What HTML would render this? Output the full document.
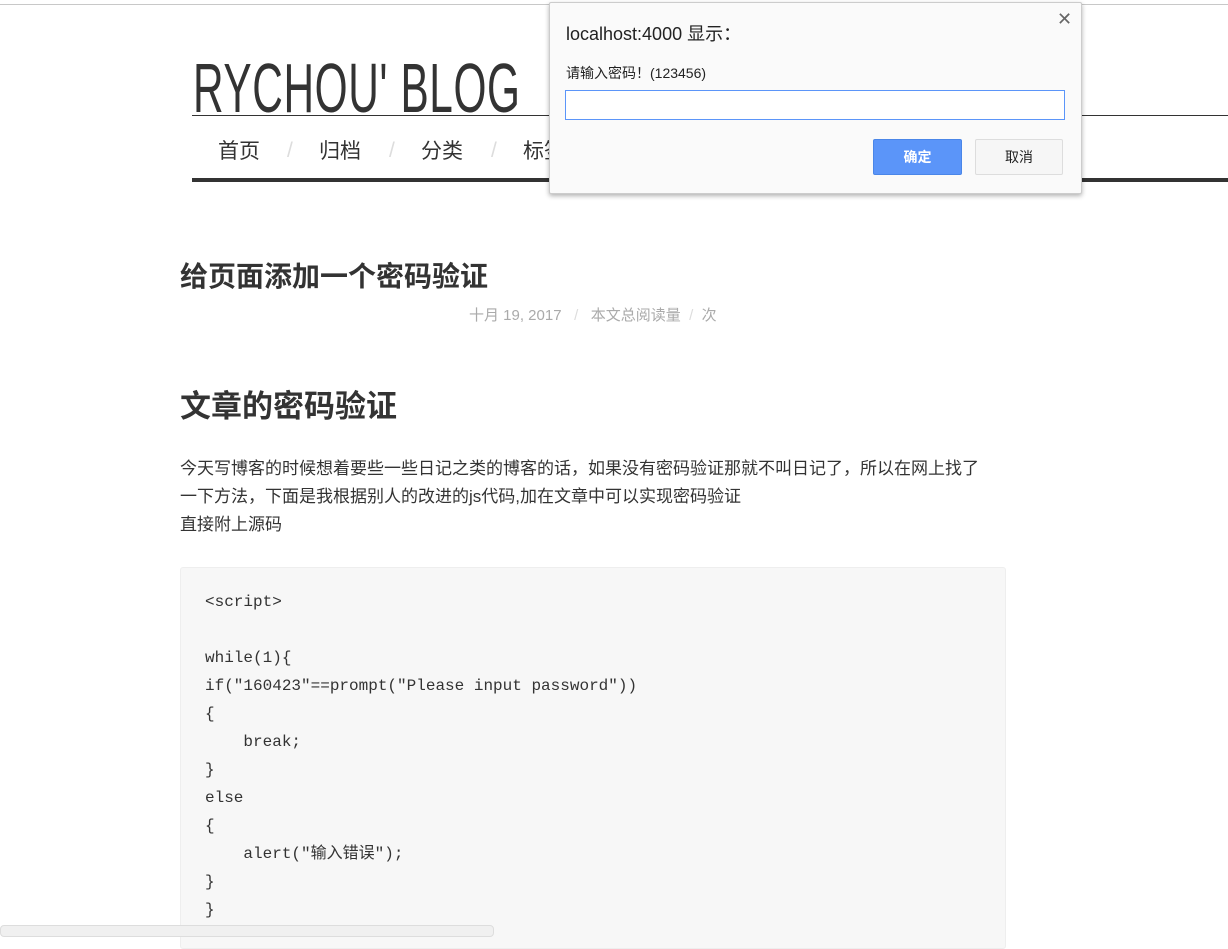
<!DOCTYPE html>
<html><head><meta charset="utf-8"><style>
body{margin:0;width:1228px;height:932px;overflow:hidden;background:#fff;position:relative;font-family:"Liberation Sans","Noto Sans CJK SC",sans-serif;color:#333}
.topline{position:absolute;left:0;top:0;width:1228px;height:4px;border-bottom:1px solid #c8c8c8;background:#fff}
.title{position:absolute;left:193px;top:48px;font-size:70px;line-height:80px;color:#333;transform:scaleX(.605);transform-origin:0 0;white-space:nowrap;letter-spacing:1px}
.ul{position:absolute;left:192px;top:115px;width:1036px;height:1px;background:#333}
.nav{position:absolute;top:135px;font-size:21px;color:#333}
.sl{position:absolute;top:139px;font-size:21px;color:#ddd}
.bar{position:absolute;left:192px;top:178px;width:1036px;height:4px;background:#333}
h1{position:absolute;left:180px;top:259px;margin:0;font-size:28px;font-weight:bold;line-height:36px}
.meta{position:absolute;left:469px;top:304px;font-size:15px;color:#aaa;white-space:nowrap}
h2{position:absolute;left:180px;top:387px;margin:0;font-size:31px;font-weight:bold;line-height:40px}
.p{position:absolute;left:180px;top:455px;font-size:17px;line-height:28px;width:815px}
.code{position:absolute;left:180px;top:567px;width:824px;height:380px;background:#f7f7f7;border:1px solid #eee;border-radius:3px}
pre{margin:0;position:absolute;left:24px;top:20px;font-family:"Liberation Mono","Noto Sans CJK SC",monospace;font-size:16px;line-height:28px;color:#333}
.bottom{position:absolute;left:0;top:925px;width:492px;height:10px;background:#f0f0f0;border:1px solid #ddd;border-radius:4px}
.dlg{position:absolute;left:549px;top:2px;width:531px;height:190px;background:#fafafa;border:1px solid #ccc;box-shadow:0 2px 5px rgba(0,0,0,.3);border-radius:2px}
.dt{position:absolute;left:16px;top:17px;font-size:18px;color:#222}
.dm{position:absolute;left:16px;top:60px;font-size:14px;color:#222}
.inp{position:absolute;left:15px;top:87px;width:498px;height:28px;background:#fff;border:1px solid #5b95f9}
.ok{position:absolute;left:323px;top:136px;width:87px;height:34px;background:#5b95f9;border:1px solid #4a86e8;color:#fff;font-size:14px;font-weight:bold;text-align:center;line-height:34px;border-radius:2px}
.cc{position:absolute;left:425px;top:136px;width:86px;height:34px;background:#f6f6f6;border:1px solid #ddd;color:#222;font-size:14px;text-align:center;line-height:34px;border-radius:2px}
.x{position:absolute;left:507px;top:6px;font-size:18px;color:#666}
</style></head><body>
<div class="topline"></div>
<div class="title">RYCHOU' BLOG</div>
<div class="ul"></div>
<div class="nav" style="left:218px">首页</div><div class="sl" style="left:287px">/</div>
<div class="nav" style="left:319px">归档</div><div class="sl" style="left:389px">/</div>
<div class="nav" style="left:421px">分类</div><div class="sl" style="left:491px">/</div>
<div class="nav" style="left:523px">标签</div>
<div class="bar"></div>
<h1>给页面添加一个密码验证</h1>
<div class="meta">十月 19, 2017 &nbsp; <span style="color:#ddd">/</span> &nbsp; 本文总阅读量 &nbsp;<span style="color:#ddd">/</span>&nbsp; 次</div>
<h2>文章的密码验证</h2>
<div class="p">今天写博客的时候想着要些一些日记之类的博客的话，如果没有密码验证那就不叫日记了，所以在网上找了一下方法，下面是我根据别人的改进的js代码,加在文章中可以实现密码验证<br>直接附上源码</div>
<div class="code"><pre>&lt;script&gt;

while(1){
if("160423"==prompt("Please input password"))
{
    break;
}
else
{
    alert("输入错误");
}
}</pre></div>
<div class="bottom"></div>
<div class="dlg">
<div class="x">✕</div>
<div class="dt">localhost:4000 显示：</div>
<div class="dm">请输入密码！(123456)</div>
<div class="inp"></div>
<div class="ok">确定</div>
<div class="cc">取消</div>
</div>
</body></html>
